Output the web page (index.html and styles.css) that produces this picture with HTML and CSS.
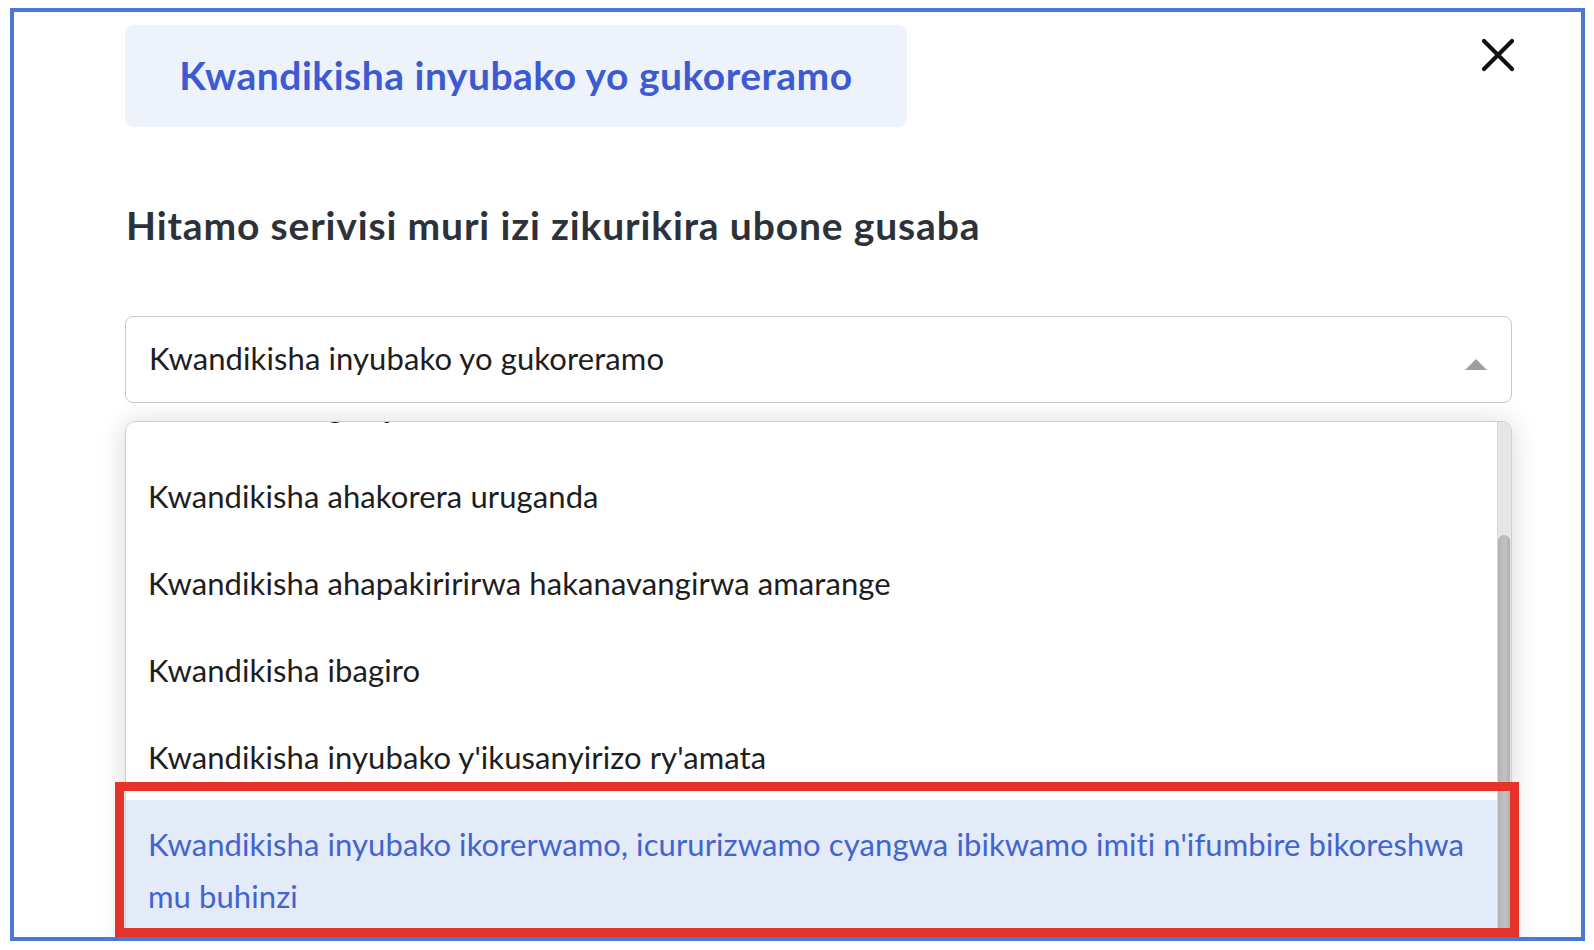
FILE: index.html
```html
<!DOCTYPE html>
<html lang="rw">
<head>
<meta charset="utf-8">
<title>Kwandikisha inyubako yo gukoreramo</title>
<link rel="stylesheet" href="styles.css">
</head>
<body>
<div class="frame">
  <div class="content">
    <div class="title-card">Kwandikisha inyubako yo gukoreramo</div>
    <h2 class="prompt">Hitamo serivisi muri izi zikurikira ubone gusaba</h2>
    <div class="select">
      <span class="select-value">Kwandikisha inyubako yo gukoreramo</span>
      <span class="caret"></span>
    </div>
    <div class="menu">
      <ul class="menu-items">
        <li class="menu-item is-clipped">Kwandikisha garaje</li>
        <li class="menu-item">Kwandikisha ahakorera uruganda</li>
        <li class="menu-item">Kwandikisha ahapakiririrwa hakanavangirwa amarange</li>
        <li class="menu-item">Kwandikisha ibagiro</li>
        <li class="menu-item">Kwandikisha inyubako y'ikusanyirizo ry'amata</li>
        <li class="menu-item is-active">Kwandikisha inyubako ikorerwamo, icururizwamo cyangwa ibikwamo imiti n'ifumbire bikoreshwa mu buhinzi</li>
      </ul>
      <div class="scrollbar"><div class="scroll-thumb"></div></div>
    </div>
  </div>
  <button class="close" aria-label="Close">
    <svg width="34" height="34" viewBox="0 0 34 34"><path d="M3 3 L31 31 M31 3 L3 31" stroke="#111" stroke-width="4.2" stroke-linecap="round" fill="none"/></svg>
  </button>
  <div class="highlight-box"></div>
</div>
</body>
</html>
```
FILE: styles.css
```css
* { box-sizing: border-box; }
html, body { margin: 0; padding: 0; background: #fff; }
body {
  font-family: "Lato", "Noto Sans", sans-serif;
  padding: 8px 0 0 10px;
}
.frame {
  position: relative;
  width: 1575px;
  height: 933px;
  border: 4px solid #4a78d4;
  overflow: hidden;
  background: #fff;
}
.content {
  padding: 13px 69px 0 111px;
}
.title-card {
  width: 782px;
  height: 102px;
  background: #eef2fb;
  border-radius: 9px;
  color: #3c5bd3;
  font-weight: 700;
  font-size: 39px;
  letter-spacing: 0.5px;
  line-height: 100px;
  text-align: center;
}
.prompt {
  margin: 74px 0 0 1px;
  font-size: 39px;
  letter-spacing: 0.85px;
  line-height: 48px;
  font-weight: 700;
  color: #2d323a;
}
.select {
  margin-top: 67px;
  height: 87px;
  border: 1.5px solid #c9c9c9;
  border-radius: 8px;
  display: flex;
  align-items: center;
  justify-content: space-between;
  padding: 0 24px 4px 23px;
  font-size: 31px;
  letter-spacing: 0.1px;
  color: #1e1e1e;
}
.caret {
  width: 0;
  height: 0;
  border-left: 11px solid transparent;
  border-right: 11px solid transparent;
  border-bottom: 11px solid #9e9e9e;
  margin-top: 13px;
}
.menu {
  position: relative;
  margin-top: 18px;
  height: 560px;
  border: 1.5px solid #cfcfcf;
  border-radius: 10px;
  overflow: hidden;
  box-shadow: 0 2px 28px rgba(0, 0, 0, 0.16);
  background: #fff;
}
.menu-items {
  list-style: none;
  margin: -60px 0 0 0;
  padding: 0;
}
.menu-item {
  padding: 17.5px 30px 17.5px 22px;
  font-size: 31px;
  letter-spacing: 0.1px;
  line-height: 52px;
  color: #1e1e1e;
}
.menu-item.is-clipped {
  padding-bottom: 20.5px;
}
.menu-item.is-active {
  background: #e3eaf8;
  color: #4264cf;
}
.scrollbar {
  position: absolute;
  top: 0;
  right: 0;
  bottom: 0;
  width: 14px;
  background: #e6e6e6;
  border-left: 1px solid #d6d6d6;
}
.scroll-thumb {
  position: absolute;
  left: 0;
  right: 1px;
  top: 113px;
  bottom: 0;
  background: linear-gradient(to right, #b3b3b3, #c2c2c2 60%, #b0b0b0);
  border-radius: 7px 7px 0 0;
}
.close {
  position: absolute;
  top: 26px;
  left: 1467px;
  width: 34px;
  height: 34px;
  padding: 0;
  border: 0;
  background: none;
}
.close svg { display: block; }
.highlight-box {
  position: absolute;
  left: 101px;
  top: 770px;
  width: 1404px;
  height: 155px;
  border: 9px solid #e6332a;
}
```
